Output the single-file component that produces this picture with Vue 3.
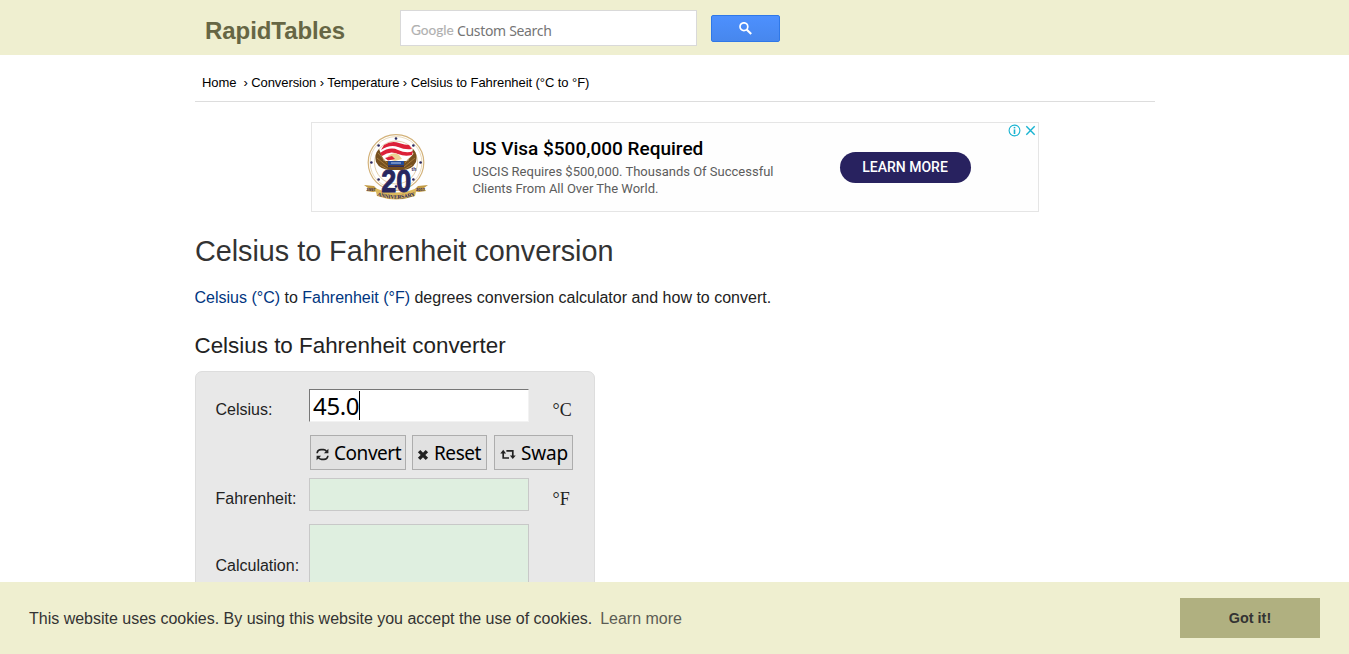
<script setup>
import { ref } from 'vue'

const crumbs = ['Conversion', 'Temperature', 'Celsius to Fahrenheit (°C to °F)']
const celsius = ref('45.0')
const stars = Array.from({ length: 8 }, (_, i) => {
  const a = (i * Math.PI) / 4
  return { x: 32 + 24.6 * Math.sin(a), y: 28.5 - 24 * Math.cos(a) }
})
</script>

<template>
  <div class="page">
    <header class="top">
      <div class="wrap top-row">
        <a class="logo">RapidTables</a>
        <div class="search"><span class="google">Google</span><span class="hint">Custom Search</span></div>
        <button class="go" aria-label="Search">
          <svg width="13" height="13" viewBox="0 0 13 13">
            <circle cx="4.9" cy="4.7" r="3.9" fill="none" stroke="#fff" stroke-width="1.7" />
            <path d="M7.6 7.4L12.2 12" stroke="#fff" stroke-width="2.1" />
          </svg>
        </button>
      </div>
    </header>

    <main class="wrap body">
      <nav class="crumbs">
        <span class="home">Home</span>
        <span v-for="c in crumbs" :key="c" class="crumb">› {{ c }}</span>
      </nav>

      <section class="ad">
        <svg class="seal" width="64" height="66" viewBox="0 0 64 66">
          <circle cx="32" cy="28.5" r="27.8" fill="#fff" stroke="#d3b27a" stroke-width="1.2" />
          <circle cx="32" cy="28.5" r="25.9" fill="none" stroke="#e3d0ab" stroke-width=".8" />
          <circle cx="32" cy="28.5" r="21.5" fill="none" stroke="#d6b987" stroke-width=".7" />
          <circle v-for="(s, i) in stars" :key="i" :cx="s.x" :cy="s.y" r="1.3" fill="#29275f" />
          <path d="M15 15Q10 20 12 28Q16 36 27 36L38 36Q48 36 52 28Q54 20 49 15L44 27L20 27Z" fill="#76501f" />
          <path d="M14 19L23 29M13 24L24 33M16 31L25 36M50 19L41 29M51 24L40 33M48 31L39 36" stroke="#a67a3c" stroke-width="1" />
          <path d="M16 15Q23 7 33 8Q43 8 48 15L49 20Q45 27 37 25Q27 18 20 25Z" fill="#fff" />
          <path d="M20 11Q28 6 35 9Q41 11 45 11L48 15Q41 16 34 13Q26 10 17 16ZM16 19Q26 12 34 16Q43 20 49 17L48 21Q41 23 34 20Q26 16 18 22Z" fill="#dc2138" />
          <path d="M24 22Q30 17 35 21L38 25L31 27L23 25Z" fill="#ecd194" />
          <path d="M21 24L28 22L31 25L24 26.5Z" fill="#dc2138" />
          <rect x="24" y="27" width="16" height="4" fill="#234b9a" />
          <rect x="27" y="28.5" width="10" height="1" fill="#b8c9e6" />
          <rect x="24" y="31.5" width="16" height="1.4" fill="#28265f" />
          <path d="M0 51L10 52L15 57L9 58L2 57L4 54ZM64 51L54 52L49 57L55 58L62 57L60 54Z" fill="#c29a43" />
          <path d="M11 54Q32 63 53 54L51 62Q32 69 13 62Z" fill="#dcb85c" />
          <text x="2.5" y="57" class="ribbon">1997</text>
          <text x="52" y="57" class="ribbon">2017</text>
          <text x="32.2" y="58" text-anchor="middle" class="twenty-edge" textLength="30" lengthAdjust="spacingAndGlyphs">20</text>
          <text x="47.5" y="37" class="th">th</text>
          <path id="banner-line" d="M12 61.5Q32 68 52 61.5" fill="none" />
          <text class="anniv"><textPath href="#banner-line" startOffset="1" textLength="39">ANNIVERSARY</textPath></text>
        </svg>
        <div class="ad-copy">
          <div class="ad-title">US Visa $500,000 Required</div>
          <div class="ad-text">USCIS Requires $500,000. Thousands Of Successful<br />Clients From All Over The World.</div>
        </div>
        <a class="ad-cta">LEARN MORE</a>
        <svg class="ad-marks" width="29" height="13" viewBox="0 0 29 13">
          <g fill="none" stroke="#18b3d1">
            <circle cx="6.5" cy="6.5" r="5.4" stroke-width="1.1" />
            <path d="M6.5 5.4V10" stroke-width="1.6" />
            <path d="M18.3 2.3L26.7 10.7M26.7 2.3L18.3 10.7" stroke-width="1.4" />
          </g>
          <rect x="5.7" y="2.9" width="1.6" height="1.5" fill="#18b3d1" />
        </svg>
      </section>

      <h1>Celsius to Fahrenheit conversion</h1>
      <p class="intro"><a>Celsius (°C)</a> to <a>Fahrenheit (°F)</a> degrees conversion calculator and how to convert.</p>
      <h2>Celsius to Fahrenheit converter</h2>

      <form class="calc" @submit.prevent>
        <div class="row first">
          <label>Celsius:</label>
          <div class="entry">{{ celsius }}<i class="caret"></i></div>
          <span class="unit">°C</span>
        </div>
        <div class="buttons">
          <button type="button" class="btn convert">
            <svg width="13" height="13" viewBox="0 0 13 13">
              <path d="M1.2 5.2V4.6Q1.8 1.6 5 1.6H7.5Q9.2 1.7 10.5 3.2M11.8 7.8V8.4Q11.2 11.4 8 11.4H5.5Q3.8 11.3 2.5 9.8" fill="none" stroke="#222" stroke-width="1.6" />
              <path d="M12.4.8V5.3H7.9ZM.6 12.2V7.7H5.1Z" fill="#222" />
            </svg>
            <span>Convert</span>
          </button>
          <button type="button" class="btn reset">
            <svg width="12" height="12" viewBox="0 0 12 12"><path d="M2.1 2.1L9.9 9.9M9.9 2.1L2.1 9.9" stroke="#222" stroke-width="3.4" /></svg>
            <span>Reset</span>
          </button>
          <button type="button" class="btn swap">
            <svg width="16" height="11" viewBox="0 0 16 11">
              <path d="M3.2 3V9H9M6.4 1.8H12.8V7.5" fill="none" stroke="#222" stroke-width="1.7" />
              <path d="M.3 4.4L3.2.8L6.1 4.4ZM9.9 6.4H15.7L12.8 10Z" fill="#222" />
            </svg>
            <span>Swap</span>
          </button>
        </div>
        <div class="row second">
          <label>Fahrenheit:</label>
          <div class="result"></div>
          <span class="unit">°F</span>
        </div>
        <div class="row third">
          <label>Calculation:</label>
          <div class="result tall"></div>
        </div>
      </form>
    </main>

    <footer class="cookies">
      <span class="notice">This website uses cookies. By using this website you accept the use of cookies. <a>Learn more</a></span>
      <button>Got it!</button>
    </footer>
  </div>
</template>

<style>
body { margin: 0; overflow: hidden; }
</style>

<style scoped>
* { box-sizing: border-box; }
.page { height: 654px; display: flex; flex-direction: column; background: #fff; color: #222; font: 16px/20px "Liberation Sans", Arial, sans-serif; overflow: hidden; }
.wrap { width: 960px; margin-left: 195px; }
button { font: inherit; padding: 0; margin: 0; border-radius: 0; }
.top { flex: none; height: 55px; background: #efefd0; }
.top-row { display: flex; align-items: flex-start; }
.logo { width: 195px; margin-left: 10px; padding-top: 16px; font-size: 24px; line-height: 30px; letter-spacing: -.07px; font-weight: bold; color: #666644; }
.search { width: 297px; height: 36px; margin-top: 10px; padding: 0 10px; border: 1px solid #d9d9d9; background: #fff; display: flex; line-height: 40px; white-space: nowrap; }
.google { width: 46px; font: 13.6px/38px Lato, sans-serif; color: #b0b0b0; -webkit-text-stroke: .15px #b0b0b0; }
.hint { font: 14px/40px "Noto Sans", sans-serif; letter-spacing: -.33px; color: #757575; }
.go { width: 69px; height: 27px; margin: 15px 0 0 14px; border: 1px solid #2f78e8; border-radius: 2px; background: linear-gradient(#4d90fe, #4787ed); display: flex; justify-content: center; padding-top: 6px; }
.body { flex: 1; min-height: 0; overflow: hidden; }
.crumbs { height: 47px; padding: 18px 0 0 7px; border-bottom: 1px solid #ddd; font-size: 13px; line-height: 20px; letter-spacing: -.07px; color: #000; display: flex; white-space: nowrap; }
.home { margin-right: 7px; }
.crumb { margin-right: 3.4px; }
.ad { position: relative; width: 728px; height: 90px; margin: 20px 0 0 116px; border: 1px solid #e5e5e5; background: #fefefe; display: flex; font-family: Roboto, sans-serif; }
.seal { margin: 11px 0 0 52px; flex: none; }
.twenty-edge { font: bold 32px "Liberation Sans", sans-serif; fill: #28265f; stroke: #28265f; stroke-width: .9px; }
.ribbon { font: bold 4px "Liberation Sans", sans-serif; fill: #29275f; }
.anniv { font: bold 5.5px "Liberation Serif", serif; fill: #29275f; }
.th { font: bold 5px "Liberation Sans", sans-serif; fill: #29275f; }
.ad-copy { width: 367px; margin-left: 44.5px; padding-top: 14px; white-space: nowrap; }
.ad-title { font-size: 19px; line-height: 24px; font-weight: 500; color: #000; }
.ad-text { margin-top: 2px; font-size: 13px; line-height: 17px; color: #5c5c5c; }
.ad-cta { width: 131px; height: 31px; margin-top: 29px; border-radius: 16px; background: #28225f; color: #fff; font-size: 14px; line-height: 31px; font-weight: 500; text-align: center; }
.ad-marks { position: absolute; top: 1px; right: 1.5px; }
h1 { margin: 21px 0 0; font-size: 28.8px; line-height: 36px; font-weight: normal; letter-spacing: -.03px; color: #333; white-space: nowrap; }
.intro { margin: 19px 0 0 -.5px; line-height: 20px; white-space: nowrap; }
.intro a { color: #003580; }
h2 { margin: 25px 0 0 -.5px; font-size: 22.4px; line-height: 26px; font-weight: normal; }
.calc { width: 400px; height: 330px; margin-top: 12px; padding: 17px 0 0 20px; border: 1px solid #ddd; border-radius: 7px; background: #e8e8e8; }
.row { display: grid; grid-template-columns: 93px 220px 1fr; }
.row label { align-self: end; margin-left: -.5px; white-space: nowrap; }
.first label { margin-bottom: 2px; }
.second label { margin-bottom: 2px; }
.third .result { grid-row: 1; grid-column: 2; }
.third label { align-self: start; margin-top: 32px; }
.entry { height: 33px; padding-left: 3px; background: #fff; border: 1px solid #f2f2f2; border-top-color: #777; border-left-color: #777; display: flex; align-items: center; font: 24px/31px "Noto Sans", sans-serif; letter-spacing: -.35px; color: #000; }
.caret { width: 1px; height: 29px; background: #000; }
.unit { align-self: end; margin: 0 0 2px 23.5px; font: 18px/20px "Liberation Serif", serif; }
.buttons { display: flex; margin: 13px 0 8px 94px; height: 35px; }
.btn { height: 35px; border: 1px solid #adadad; background: #e1e1e1; font: 19px/34px "Noto Sans", sans-serif; letter-spacing: -.45px; color: #000; display: flex; align-items: center; padding: 0 0 0 5px; white-space: nowrap; }
.btn svg { flex: none; margin-top: 4px; }
.btn span { margin-left: 5px; }
.convert { width: 96px; margin-right: 6px; }
.reset { width: 75px; margin-right: 7px; padding-left: 4px; }
.swap { width: 79px; letter-spacing: -.2px; }
.result { height: 33px; background: #dfefe0; border: 1px solid #c8c8c8; }
.third { margin-top: 13px; }
.tall { height: 90px; }
.cookies { flex: none; height: 72px; padding: 0 29px; background: #efefd0; color: #333; display: flex; align-items: center; justify-content: space-between; }
.notice { padding-top: 2px; letter-spacing: -.008px; }
.cookies a { color: #5c5c54; margin-left: 3.5px; }
.cookies button { width: 140px; height: 40px; border: 0; background: #b0b080; color: #333; font-size: 14.4px; font-weight: bold; }
</style>
